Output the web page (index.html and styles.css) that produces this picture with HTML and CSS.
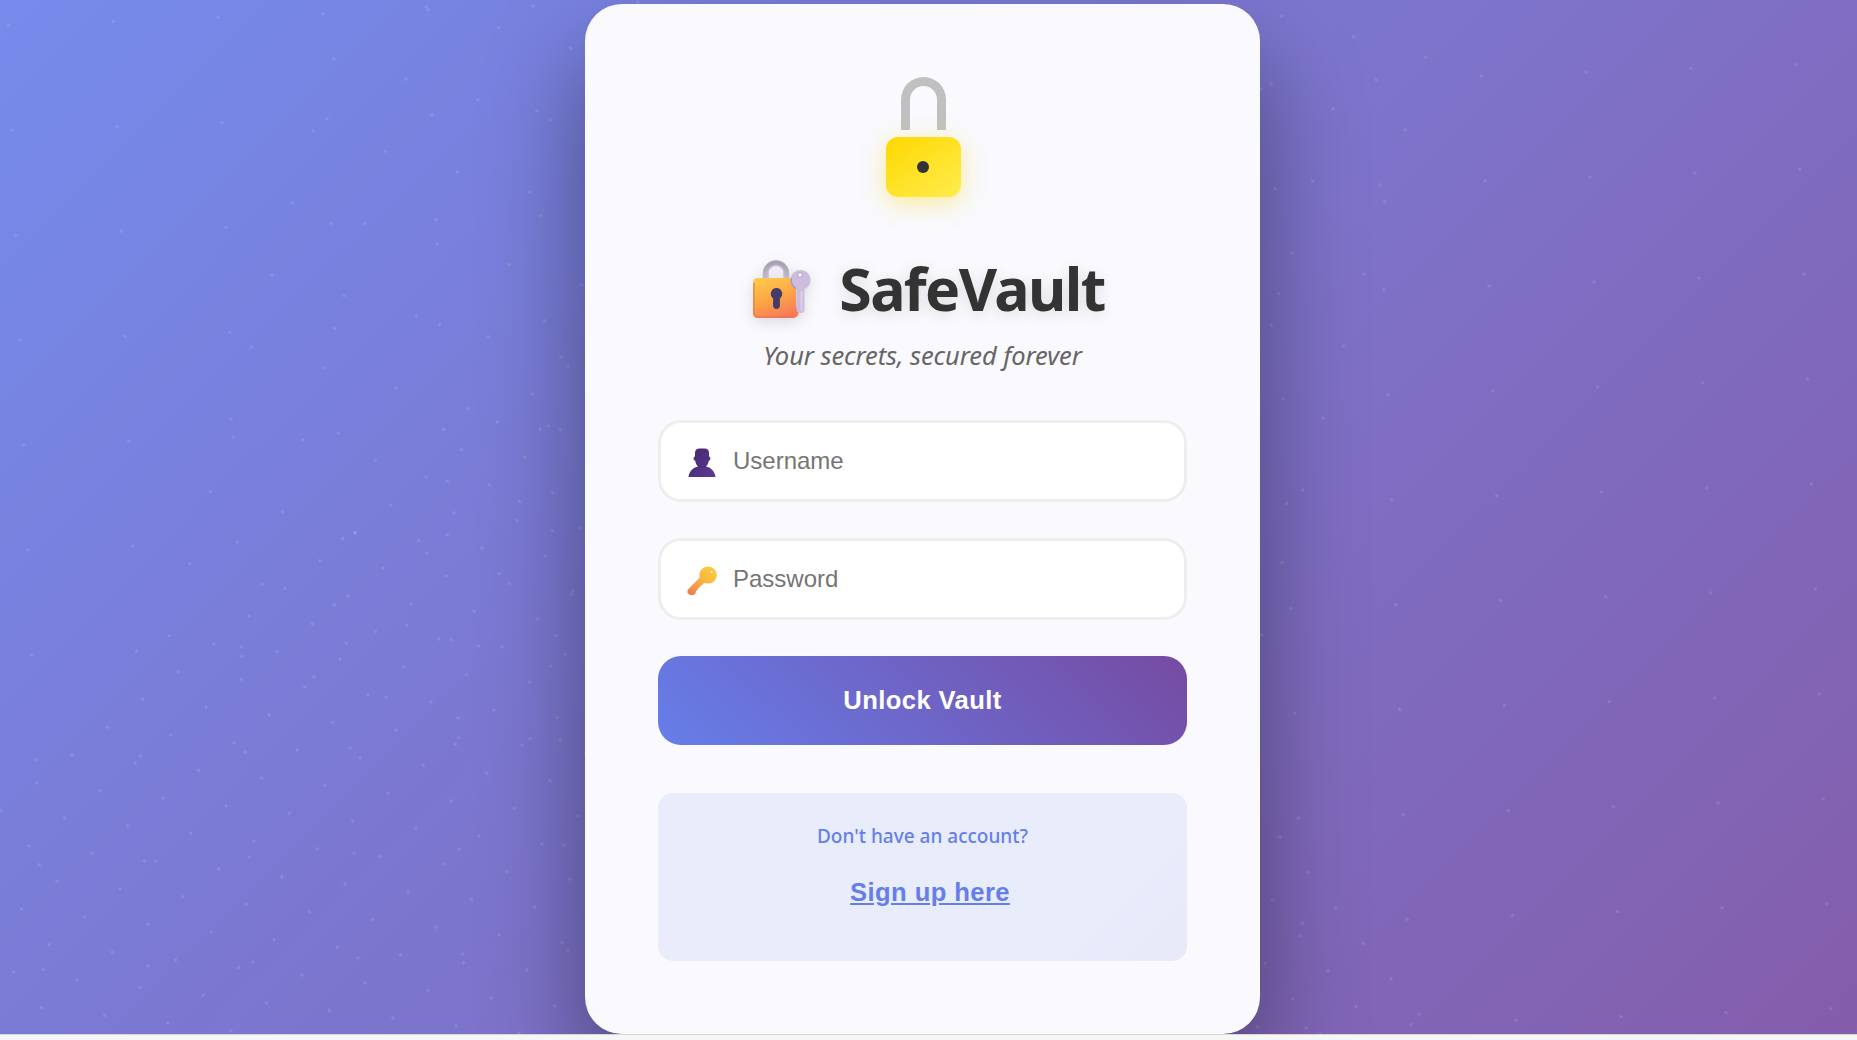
FILE: index.html
```html
<!DOCTYPE html>
<html lang="en">
<head>
<meta charset="utf-8">
<title>SafeVault</title>
<link rel="stylesheet" href="styles.css">
</head>
<body>
<main class="scene">
  <svg class="particles" width="1857" height="1034" aria-hidden="true">
    <defs>
      <pattern id="wide" x="-52.5" y="-52.5" width="105" height="105" patternUnits="userSpaceOnUse"><circle class="dot" cx="52.5" cy="52.5" r="1.6"/></pattern>
      <pattern id="mid" x="-37.5" y="-37.5" width="75" height="75" patternUnits="userSpaceOnUse"><circle class="dot" cx="37.5" cy="37.5" r="1.6"/></pattern>
      <pattern id="dense" x="-22.5" y="-22.5" width="45" height="45" patternUnits="userSpaceOnUse"><circle class="dot" cx="22.5" cy="22.5" r="1.6"/></pattern>
    </defs>
    <rect transform="translate(8.3 25.3) rotate(-2.116)" x="-105" y="-105" width="2100" height="1365" fill="url(#wide)"/>
    <rect transform="translate(169.5 635.7) rotate(15.88)" x="-37.5" y="-1087.5" width="1125" height="1125" fill="url(#mid)"/>
    <rect transform="translate(532.5 394) rotate(51.9)" x="-22.5" y="-337.5" width="1575" height="1350" fill="url(#dense)"/>
  </svg>

  <section class="card">
    <div class="padlock">
      <div class="shackle"></div>
      <div class="lock-body"><span class="keyhole"></span></div>
    </div>

    <h1 class="title">
      <svg class="title-icon" viewBox="0 0 58 60" width="58" height="60" aria-hidden="true">
        <defs>
          <linearGradient id="gold" x1="0.2" y1="0" x2="0.6" y2="1"><stop offset="0" stop-color="#ffc84a"/><stop offset=".5" stop-color="#fca845"/><stop offset="1" stop-color="#f87a58"/></linearGradient>
          <linearGradient id="steel" x1="0" y1="0" x2="0" y2="1"><stop offset="0" stop-color="#a6a3aa"/><stop offset="1" stop-color="#c2bdc9"/></linearGradient>
        </defs>
        <path d="M12.500 21V14.500a10.500 10.500 0 0 1 21 0V21" fill="none" stroke="url(#steel)" stroke-width="5.500"/>
        <path d="M14.800 20V14.500a8.200 8.200 0 0 1 16.400 0V20" fill="none" stroke="#cbb6e4" stroke-width="1.400"/>
        <path d="M5 19H37.500C38 24 41 27 43 28.500V44L44 46 43 48 45.500 50V55Q44 58.500 41 59H5Q0 59 0 54V24Q0 19 5 19Z" fill="url(#gold)"/>
        <path d="M1 24V54Q1 58 5 58H41" fill="none" stroke="#e86f50" stroke-width="1.600" opacity=".65"/>
        <path d="M23.500 29a5.800 5.800 0 0 1 3.400 10.400V46.500a3.400 3.400 0 0 1-6.800 0V39.400A5.800 5.800 0 0 1 23.500 29Z" fill="#433b6b"/>
        <path d="M47.500 11a10 10 0 0 1 4 19.200V51.500Q51.500 54 47.500 54 44 54 43.500 51V48L42.500 46 43.500 44.500V42L42.500 40.500 43.500 39V30.200A10 10 0 0 1 47.500 11Z" fill="#cdbddd"/>
        <path d="M48.500 32V52" stroke="#decfec" stroke-width="2"/>
        <path d="M38.500 19A9 9 0 0 0 43 29.500" fill="none" stroke="#aa94c3" stroke-width="1.500"/>
        <circle cx="47" cy="16" r="2.300" fill="#f6f3fb" stroke="#a994c0" stroke-width=".7"/>
      </svg>
      <span class="title-text">SafeVault</span>
    </h1>
    <p class="tagline">Your secrets, secured forever</p>

    <form class="form">
      <label class="field">
        <svg class="field-icon user-icon" viewBox="0 0 30 32" width="30" height="32" aria-hidden="true">
          <defs><linearGradient id="bust" x1="0" y1="0" x2="1" y2="1"><stop offset="0" stop-color="#43286b"/><stop offset="1" stop-color="#5e3b96"/></linearGradient></defs>
          <path d="M8 9.500V6Q8 1.500 12.500 1.500H17.500Q22 1.500 22 6V9.500C24 9.800 23.800 13.500 21.800 13.800C21.500 16.500 20.300 18.300 18.800 19.500C24.500 20.500 28 25 28.500 30H1.500C2 25 5.500 20.500 11.200 19.500C9.700 18.300 8.500 16.500 8.200 13.800C6.200 13.500 6 9.800 8 9.500Z" fill="url(#bust)"/>
          <path d="M10.500 18.500Q15 20.800 19.500 18.500L18.800 19.700Q15 21.300 11.200 19.700Z" fill="#3b225f" opacity=".6"/>
        </svg>
        <input class="input" type="text" placeholder="Username">
      </label>
      <label class="field">
        <svg class="field-icon key-icon" viewBox="0 0 30 32" width="30" height="32" aria-hidden="true">
          <defs><linearGradient id="brass" x1="1" y1="0" x2="0" y2="1"><stop offset="0" stop-color="#ffd23c"/><stop offset=".5" stop-color="#f9b340"/><stop offset="1" stop-color="#ee7650"/></linearGradient></defs>
          <path d="M21 1.500A8.500 8.500 0 1 1 18.500 18L16 18.500 15.500 20 13.500 20.500 13 22.500 11 23 10.500 25 9 26 8.500 28.500 6.500 30H3L.500 28V25L12.800 12.500A8.500 8.500 0 0 1 21 1.500Z" fill="url(#brass)"/>
          <path d="M12 16.500L3 25.500" stroke="#ffa75e" stroke-width="1" opacity=".7"/>
          <circle cx="24.500" cy="7" r="1.800" fill="#fff6d0" stroke="#df9a2c" stroke-width=".6"/>
        </svg>
        <input class="input" type="password" placeholder="Password">
      </label>
      <button class="submit" type="button">Unlock Vault</button>
    </form>

    <div class="signup">
      <p class="signup-note">Don't have an account?</p>
      <a class="signup-link" href="#">Sign up here</a>
    </div>
  </section>
</main>
</body>
</html>
```
FILE: styles.css
```css
* { box-sizing: border-box; }

body {
  margin: 0;
  height: 1040px;
  overflow: hidden;
  background: #f8faf9;
  font-family: "Noto Sans", "Open Sans", sans-serif;
}

.scene {
  position: relative;
  display: flex;
  justify-content: center;
  height: 1034px;
  padding-top: 4px;
  overflow: hidden;
  background: linear-gradient(rgba(255, 255, 255, .1), rgba(255, 255, 255, .1)), linear-gradient(135deg, #667eea, #764ba2);
}

body::after {
  content: "";
  display: block;
  height: 6px;
  border-top: 1px solid #d6d6d6;
  background: #f5f6f6;
}

.particles { position: absolute; inset: 0; }
.dot { fill: rgba(255, 255, 255, .13); }

.card {
  position: relative;
  display: flex;
  flex-direction: column;
  width: 675px;
  height: 1030px;
  margin-right: 12px;
  padding: 73px 73px 72px;
  border-radius: 37px;
  background: #f9f9fe;
  box-shadow: 0 50px 100px rgba(0, 0, 0, .4);
}

.padlock {
  display: flex;
  flex-direction: column;
  align-items: center;
  gap: 7px;
  height: 120px;
  padding-left: 1px;
}
.shackle {
  width: 45px;
  height: 53px;
  border: 9px solid #c0c0c0;
  border-bottom: 0;
  border-radius: 23px 23px 0 0;
}
.lock-body {
  display: grid;
  place-items: center;
  width: 75px;
  height: 60px;
  border-radius: 12px;
  background: linear-gradient(145deg, #ffd700, #ffed4e);
  box-shadow: 0 6px 24px rgba(255, 215, 0, .4);
}
.keyhole {
  width: 12px;
  height: 12px;
  border-radius: 50%;
  background: #333;
}

.title {
  display: flex;
  justify-content: center;
  gap: 28px;
  height: 84px;
  margin: 49px 0 0;
  padding: 12px 0 0 13px;
  font-size: 59px;
  font-weight: 700;
  line-height: 60px;
  color: #333;
}
.title-icon {
  margin-top: 1px;
  filter: drop-shadow(0 4px 7px rgba(0, 0, 0, .12));
}
.title-text {
  letter-spacing: -1.600px;
  text-shadow: 0 3px 15px rgba(0, 0, 0, .12);
}

.tagline {
  height: 90px;
  margin: 0;
  font-size: 25.500px;
  font-style: italic;
  line-height: 50px;
  letter-spacing: -.08px;
  text-align: center;
  color: #666;
}

.form {
  display: flex;
  flex-direction: column;
  gap: 36px;
}
.field {
  display: flex;
  align-items: center;
  gap: 14px;
  height: 82px;
  padding-left: 26px;
  border: 3px solid #eee;
  border-radius: 23px;
  background: #fff;
}
.user-icon { margin-top: 4px; }
.key-icon { margin-top: 3px; }
.input {
  flex: 1;
  min-width: 0;
  padding: 0 20px 0 2px;
  border: 0;
  outline: 0;
  background: transparent;
  font: 24px "Liberation Sans", Arial, sans-serif;
  color: #333;
}
.input::placeholder { color: #757575; }

.submit {
  height: 89px;
  padding: 0;
  border: 0;
  border-radius: 23px;
  background: linear-gradient(45deg, #667eea, #764ba2);
  font: 700 25.600px "Liberation Sans", Arial, sans-serif;
  letter-spacing: .4px;
  color: #fff;
}

.signup {
  display: flex;
  flex-direction: column;
  align-items: center;
  height: 168px;
  margin-top: 48px;
  padding-top: 28px;
  border-radius: 15px;
  background: linear-gradient(135deg, #e8ecfb 80%, #e8e9f9);
  color: #667eea;
}
.signup-note {
  margin: 0;
  font-size: 19px;
  font-weight: 500;
  line-height: 30px;
}
.signup-link {
  margin: 26px 0 0 15px;
  font: 700 25.600px/30px "Liberation Sans", Arial, sans-serif;
  letter-spacing: .4px;
  color: #667eea;
}
```
